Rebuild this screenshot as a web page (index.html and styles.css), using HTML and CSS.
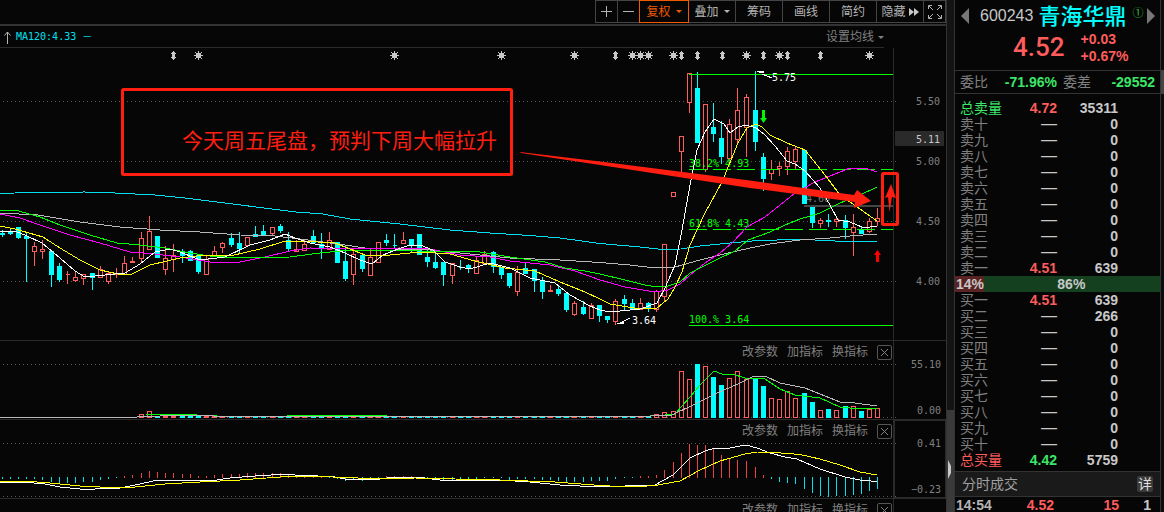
FILE: index.html
```html
<!DOCTYPE html>
<html lang="zh-CN">
<head>
<meta charset="utf-8">
<title>青海华鼎 600243</title>
<link rel="stylesheet" href="styles.css">
</head>
<body>
<div class="app">
  <main class="charts">
    <div class="toolbar">
      <button class="tool icon" aria-label="放大"><svg width="11" height="11"><path d="M0 5.5h11M5.5 0v11"/></svg></button>
      <button class="tool icon" aria-label="缩小"><svg width="11" height="11"><path d="M0 5.5h11"/></svg></button>
      <button class="tool wide active">复权<span class="caret"></span></button>
      <button class="tool wide">叠加<span class="caret"></span></button>
      <button class="tool wide">筹码</button>
      <button class="tool wide">画线</button>
      <button class="tool wide">简约</button>
      <button class="tool wide tight">隐藏<svg width="10" height="8"><path class="solid" d="M0 0l5 4l-5 4zM5 0l5 4l-5 4z"/></svg></button>
      <button class="tool icon" aria-label="全屏"><svg width="14" height="14"><path d="M.5 4V.5H4M10 .5h3.500V4M13.500 10v3.500H10M4 13.500H.5V10M1 1l4 4M13 1l-4 4M13 13l-4-4M1 13l4-4"/></svg></button>
    </div>

    <section class="pane price">
      <header class="ma-bar">
        <svg width="7" height="13"><path d="M3.500 13V1M.5 4.500l3-3.500l3 3.500"/></svg>
        <span class="ma-value">MA120:4.33 －</span>
        <button class="ma-set">设置均线<span class="caret"></span></button>
      </header>
      <svg class="plot" viewBox="0 48 946 292" preserveAspectRatio="xMaxYMin slice">
        <defs>
          <path id="diamond" d="M-.5-4.500h1v1h1v1h1v1h-1v3h1v1h-1v1h-1v1h-1v-1h-1v-1h-1v-1h1v-3h-1v-1h1v-1h1z"/>
          <path id="star" d="M-2.500-2.500h5v5h-5zM-.5-4.500h1v9h-1zM-4.500-.5h9v1h-9zM-3.500-3.500h1v1h-1zM2.500-3.500h1v1h-1zM-3.500 2.500h1v1h-1zM2.500 2.500h1v1h-1z"/>
        </defs>
        <path class="grid" d="M3 101.500H896M3 161.500H896M3 221.500H896M3 281.500H896"/>
        <path class="axis" d="M893.500 48V340"/>
        <g id="marks"></g>
        <path class="cost" d="M804 206H893"/>
        <text class="num dim" x="806" y="202">4.66</text>
        <g id="candles"></g>
        <path class="line green" d="M689 74.500H893M689 325.500H893"/>
        <path class="line green dash" d="M689 169.500H893M689 229.500H893"/>
        <g class="num green-text">
          <text x="689" y="167">38.2% 4.93</text>
          <text x="689" y="227">61.8% 4.43</text>
          <text x="689" y="323">100.% 3.64</text>
        </g>
        <g id="averages"></g>
        <path class="line white" d="M757 71.500h7M759 72.500h5M762 74l10 4M617 323.500h7M620 322.500h4M622 322l8-4"/>
        <text class="num bright" x="772" y="81">5.75</text>
        <text class="num bright" x="632" y="324">3.64</text>
        <path fill="#00f800" d="M762 110h3v8h2l-3.500 5l-3.500-5h2z"/>
        <path fill="#ff0000" d="M876 262h3v-7h2l-3.500-5l-3.500 5h2z"/>
        <g class="num axis-text">
          <text x="940" y="105">5.50</text>
          <rect x="895" y="131" width="49" height="15" rx="1"/>
          <text class="current" x="940" y="143">5.11</text>
          <text x="940" y="165">5.00</text>
          <text x="940" y="225">4.50</text>
          <text x="940" y="285">4.00</text>
        </g>
        <rect class="note-box" x="122.500" y="89.500" width="389" height="85" rx="1"/>
        <text class="note" x="182" y="148">今天周五尾盘，预判下周大幅拉升</text>
        <path class="note-fill" d="M520 152L600 161.500L750 180.500L854 195L857 190L871 201L854 208L855 202L750 188L600 165L521 153z"/>
        <rect class="note-box" x="882.500" y="173.500" width="15" height="51" rx="1"/>
        <path class="note-fill" d="M891 184l5 14l-4-1l-2.500 15l-1.500-15l-3 1z"/>
      </svg>
    </section>

    <section class="pane">
      <div class="pane-tools">
        <button>改参数</button><button>加指标</button><button>换指标</button>
        <button class="close" aria-label="关闭"><svg width="9" height="9"><path d="M1 1l7 7M8 1l-7 7"/></svg></button>
      </div>
      <svg class="plot" viewBox="0 341 946 78" preserveAspectRatio="xMaxYMin slice">
        <path class="grid" d="M3 364.500H896M3 417.500H896"/>
        <path class="axis" d="M893.500 341V419"/>
        <g id="volume"></g>
        <g class="num axis-text"><text x="941" y="368">55.10</text><text x="941" y="414">0.00</text></g>
      </svg>
    </section>

    <section class="pane">
      <div class="pane-tools">
        <button>改参数</button><button>加指标</button><button>换指标</button>
        <button class="close" aria-label="关闭"><svg width="9" height="9"><path d="M1 1l7 7M8 1l-7 7"/></svg></button>
      </div>
      <svg class="plot" viewBox="0 420 946 78" preserveAspectRatio="xMaxYMin slice">
        <path class="grid" d="M3 443.500H896M3 496.500H896"/>
        <path class="axis" d="M893.500 420V498"/>
        <rect class="selected" x="894.500" y="420.500" width="51" height="77"/>
        <g id="macd"></g>
        <g class="num axis-text"><text x="941" y="447">0.41</text><text x="941" y="493">−0.23</text></g>
      </svg>
    </section>

    <section class="pane last">
      <div class="pane-tools">
        <button>改参数</button><button>加指标</button><button>换指标</button>
        <button class="close" aria-label="关闭"><svg width="9" height="9"><path d="M1 1l7 7M8 1l-7 7"/></svg></button>
      </div>
      <div class="axis-blank"></div>
    </section>
  </main>

  <div class="splitter"><div class="thumb"><svg width="5" height="19"><path class="solid" d="M1 0l3 6v7l-3 6z"/></svg></div></div>

  <aside class="quote">
    <header class="stock">
      <div class="stock-name">
        <button class="nav" aria-label="上一只"><svg width="8" height="16"><path d="M8 0v16L0 8z"/></svg></button>
        <span class="code">600243</span>
        <h1>青海华鼎</h1>
        <span class="badge">①</span>
        <button class="nav" aria-label="下一只"><svg width="8" height="16"><path d="M0 0v16L8 8z"/></svg></button>
      </div>
      <div class="stock-price">
        <strong>4.52</strong>
        <div class="change"><span>+0.03</span><span>+0.67%</span></div>
      </div>
    </header>
    <div class="ratio">
      <span>委比</span><b class="rate">-71.96%</b><span>委差</span><b>-29552</b>
    </div>
    <table class="book sell">
      <tbody>
        <tr class="total down"><th>总卖量</th><td class="up">4.72</td><td>35311</td></tr>
        <tr><th>卖十</th><td class="none">—</td><td>0</td></tr>
        <tr><th>卖九</th><td class="none">—</td><td>0</td></tr>
        <tr><th>卖八</th><td class="none">—</td><td>0</td></tr>
        <tr><th>卖七</th><td class="none">—</td><td>0</td></tr>
        <tr><th>卖六</th><td class="none">—</td><td>0</td></tr>
        <tr><th>卖五</th><td class="none">—</td><td>0</td></tr>
        <tr><th>卖四</th><td class="none">—</td><td>0</td></tr>
        <tr><th>卖三</th><td class="none">—</td><td>0</td></tr>
        <tr><th>卖二</th><td class="none">—</td><td>0</td></tr>
        <tr><th>卖一</th><td class="up">4.51</td><td>639</td></tr>
      </tbody>
    </table>
    <div class="balance"><span class="buy-share" style="width:14%">14%</span><span class="sell-share">86%</span></div>
    <table class="book buy">
      <tbody>
        <tr><th>买一</th><td class="up">4.51</td><td>639</td></tr>
        <tr><th>买二</th><td class="none">—</td><td>266</td></tr>
        <tr><th>买三</th><td class="none">—</td><td>0</td></tr>
        <tr><th>买四</th><td class="none">—</td><td>0</td></tr>
        <tr><th>买五</th><td class="none">—</td><td>0</td></tr>
        <tr><th>买六</th><td class="none">—</td><td>0</td></tr>
        <tr><th>买七</th><td class="none">—</td><td>0</td></tr>
        <tr><th>买八</th><td class="none">—</td><td>0</td></tr>
        <tr><th>买九</th><td class="none">—</td><td>0</td></tr>
        <tr><th>买十</th><td class="none">—</td><td>0</td></tr>
        <tr class="total rise"><th>总买量</th><td class="fall">4.42</td><td>5759</td></tr>
      </tbody>
    </table>
    <div class="ticks-head"><h2>分时成交</h2><button>详</button></div>
    <div class="tick"><span>14:54</span><span class="up">4.52</span><span class="up">15</span><span>1</span></div>
  </aside>
  <div class="scroll"><div class="scroll-thumb"></div></div>
</div>
<script src="charts.js"></script>
</body>
</html>
```
FILE: styles.css
```css
* { box-sizing: border-box; }
body {
  margin: 0;
  background: #060606;
  color: #c8c8c8;
  font: 12px/16px "Liberation Sans", "Noto Sans CJK SC", sans-serif;
}
button {
  margin: 0; padding: 0; border: 0; background: none;
  color: inherit; font: inherit; white-space: nowrap;
}
.app { display: flex; height: 100vh; overflow: hidden; }
.charts { flex: 1; min-width: 0; display: flex; flex-direction: column; }

.toolbar {
  display: flex; justify-content: flex-end; flex: none;
  height: 26px; padding-bottom: 2px; border-bottom: 2px solid #333;
}
.tool {
  display: flex; align-items: center; justify-content: center; gap: 5px;
  height: 23px; margin-left: -1px; border: 1px solid #444; color: #b4b4b4;
}
.tool.icon { width: 23px; }
.tool.wide { width: 48px; }
.tool.tight { gap: 3px; }
.tool.active { position: relative; width: 50px; border-color: #f05a00; color: #f05a00; }
.tool svg, .ma-bar svg, .close svg { fill: none; stroke: #b4b4b4; }
.tool svg .solid, .splitter .solid { fill: #c8c8c8; stroke: none; }
.caret { border: 3px solid transparent; border-top-color: currentColor; border-bottom: 0; }

.pane { position: relative; flex: none; border-bottom: 1px solid #2a2a2a; }
.pane.last { flex: 1; display: flex; justify-content: flex-end; border: 0; overflow: hidden; }
.axis-blank { width: 53px; border-left: 1px solid #2a2a2a; }
.plot { display: block; width: 100%; }
.ma-bar {
  display: flex; align-items: center; gap: 5px;
  height: 22px; margin-right: 62px; padding: 1px 0 0 4px; border-bottom: 1px solid #2a2a2a;
}
.ma-value { color: #00e0f0; font: 10px/16px "DejaVu Sans Mono", "Noto Sans CJK SC", monospace; }
.ma-set { display: flex; align-items: center; gap: 4px; margin-left: auto; color: #808080; }
.pane-tools {
  position: absolute; top: 3px; right: 54px;
  display: flex; align-items: center; gap: 9px; color: #808080;
}
.close {
  display: flex; align-items: center; justify-content: center;
  width: 15px; height: 15px; border: 1px solid #555; border-radius: 2px;
}
.close svg { stroke: #808080; }

.grid { fill: none; stroke: #555; stroke-dasharray: 1 3; shape-rendering: crispEdges; }
.axis { stroke: #2a2a2a; shape-rendering: crispEdges; }
.selected { fill: none; stroke: #2a2a2a; }
.cost { stroke: #444; stroke-width: 2; }
.mark { fill: #c8c8c8; shape-rendering: crispEdges; }
.line { fill: none; stroke-width: 1; shape-rendering: crispEdges; }
.dash { stroke-dasharray: 18 6; }
.white { stroke: #fff; }
.yellow { stroke: #ff0; }
.green { stroke: #0f0; }
.magenta { stroke: #f0f; }
.gray { stroke: #b8b8b8; }
.cyan { stroke: #00e0f0; }
.bar-up { fill: #060606; stroke: #ff5c5c; shape-rendering: crispEdges; }
.bar-down { fill: #0ff; stroke: #0ff; shape-rendering: crispEdges; }
.macd-up { stroke: #f04040; }
.macd-down { stroke: #00e0f0; }
.num { font: 10px "DejaVu Sans Mono", monospace; }
.green-text { fill: #0f0; }
.bright { fill: #fff; }
.dim { fill: #777; }
.axis-text { fill: #808080; text-anchor: end; }
.axis-text rect { fill: #2a2a2a; }
.axis-text .current { fill: #c8c8c8; }
.note-box { fill: none; stroke: #ff1e10; stroke-width: 3; }
.note-fill { fill: #ff1e10; }
.note { fill: #ff1e10; font: 21px "Noto Sans CJK SC", sans-serif; }

.splitter {
  display: flex; flex-direction: column; justify-content: flex-end; flex: none;
  width: 9px; background: #141414; border-left: 1px solid #333; border-right: 1px solid #333;
}
.thumb { height: 20%; padding-top: 50px; background: #3a3a3a; }
.thumb svg { display: block; }

.quote { flex: none; width: 205px; display: flex; flex-direction: column; font-size: 14px; }
.quote > * { flex: none; }
.stock { height: 70px; padding: 4px 5px 0 6px; }
.stock-name { display: flex; align-items: center; height: 24px; }
.nav { width: 8px; height: 16px; flex: none; }
.nav svg { display: block; fill: #777; }
.code { margin-left: 11px; font-size: 16px; }
h1 { margin: 0 0 4px 5px; color: #0ff; font: 500 22px/24px "Noto Sans CJK SC", sans-serif; }
.badge { margin: 0 auto 8px 6px; color: #30c040; font: 11px/12px "Noto Sans CJK SC", sans-serif; }
.stock-price { display: flex; align-items: center; gap: 16px; padding-left: 52px; color: #ff5c5c; }
.stock-price strong { font: 500 26px/32px Roboto, sans-serif; }
.change { display: flex; flex-direction: column; padding-top: 3px; font-weight: bold; line-height: 17px; }
.ratio {
  display: flex; align-items: center; gap: 6px; height: 24px; padding: 0 5px;
  border: 1px solid #333; border-width: 1px 0; color: #808080;
}
.ratio b { flex: 1; text-align: right; color: #3ce668; }
.ratio .rate { flex: none; width: 63px; }
.book { width: 100%; border-collapse: collapse; table-layout: fixed; }
.book.sell { margin-top: 6px; }
.book tr { height: 16px; }
.book th { width: 50px; padding: 0 0 0 5px; color: #808080; font-weight: normal; text-align: left; }
.book td { padding: 0; font-weight: bold; text-align: right; line-height: 16px; }
.book th, .ratio, .ticks-head { line-height: 16px; white-space: nowrap; }
.book td:nth-child(2) { width: 52px; }
.book td:last-child { padding-right: 42px; }
.book td.none { font-size: 16px; font-weight: normal; }
.book .up, .up, .rise th { color: #ff5c5c; }
.book .fall, .down th { color: #3ce668; }
.balance { display: flex; height: 16px; font-weight: bold; background: #154020; }
.buy-share { background: #5a2222; padding-left: 1px; white-space: nowrap; }
.sell-share { flex: 1; padding-right: 1px; text-align: center; }
.ticks-head {
  display: flex; align-items: center; justify-content: space-between;
  height: 26px; margin-top: 3px; padding: 0 7px; background: #1a1a1a;
  border: 1px solid #333; border-width: 1px 0; color: #a0a0a0;
}
h2 { margin: 0; font-size: 14px; font-weight: normal; }
.ticks-head button { width: 16px; height: 16px; border-radius: 2px; background: #3a3a3a; color: #ddd; }
.tick {
  display: grid; grid-template-columns: 38px 60px 1fr 32px; padding: 0 9px 0 1px;
  font-weight: bold; text-align: right;
}
.tick span:first-child { color: #b4b4b4; text-align: left; }
.scroll { flex: none; width: 4px; border-left: 1px solid #333; background: #0c0c0c; }
.scroll-thumb { height: 24px; margin-top: 70px; background: #444; }
```
FILE: charts.js
```js
// Candles: centre x, direction (1 up, 0 down), body top, body bottom, high, low
const candles = [
  [2,0,233,234,230,236],[10,0,232,233,228,234],[18,0,227,237,227,238],[26,0,236,238,232,281],
  [34,1,246,251,242,265],[42,1,249,251,240,258],[51,0,251,274,251,286],[59,0,266,279,263,281],
  [67,1,274,274,271,283],[75,1,277,280,271,281],[83,1,274,278,274,284],[92,0,273,277,273,289],
  [100,1,269,277,266,277],[108,1,273,281,272,283],[116,1,273,274,268,277],[124,1,263,274,256,274],
  [132,1,261,262,257,262],[141,1,238,258,232,262],[149,1,231,249,216,249],[157,0,236,257,236,257],
  [165,1,258,269,246,274],[173,1,255,259,244,271],[182,0,251,255,249,262],[190,0,251,260,250,260],
  [198,0,255,271,254,273],[206,1,259,274,255,274],[214,1,251,256,246,256],[222,1,243,247,242,252],
  [231,0,238,244,233,246],[239,0,243,248,232,252],[247,1,237,245,237,245],[255,0,234,236,226,236],
  [263,0,231,235,225,235],[272,1,227,233,227,235],[280,0,226,230,224,232],[288,0,240,248,232,251],
  [296,1,249,251,240,251],[304,1,244,250,240,250],[313,0,236,242,230,243],[321,0,244,248,233,258],
  [329,1,240,249,232,249],[337,0,242,262,242,262],[345,0,261,278,245,280],[353,1,254,274,249,284],
  [362,0,255,268,255,271],[370,1,257,275,249,275],[378,1,242,262,242,262],[386,0,240,242,234,245],
  [394,0,245,245,234,248],[403,1,240,243,232,243],[411,0,239,244,239,251],[419,0,234,254,234,254],
  [427,0,257,261,250,266],[435,0,262,267,251,268],[443,0,262,274,262,285],[452,1,263,275,263,283],
  [460,0,267,267,260,269],[468,0,265,267,264,272],[476,1,260,273,257,273],[484,1,254,263,251,263],
  [493,0,252,266,251,272],[501,0,267,274,267,278],[509,0,273,285,273,287],[517,1,272,291,266,295],
  [525,0,268,273,262,273],[534,0,269,280,269,291],[542,0,280,291,277,298],[550,1,290,291,285,291],
  [558,0,289,293,286,295],[566,0,293,309,293,311],[574,1,303,314,301,315],[583,0,307,313,301,314],
  [591,1,305,318,303,318],[599,0,305,315,305,321],[607,0,316,319,316,322],[615,1,301,321,299,324],
  [624,0,299,303,295,310],[632,0,303,308,299,308],[640,1,303,309,298,309],[648,0,303,308,302,311],
  [656,1,291,309,290,311],[664,1,244,296,244,301],[673,1,192,196,192,196],[681,1,136,151,136,174],
  [689,1,73,102,73,112],[697,0,88,142,72,142],[705,1,104,169,104,171],[713,0,127,133,103,141],
  [721,0,138,156,121,163],[729,1,124,158,119,160],[737,1,110,139,88,143],[746,1,97,127,94,156],
  [755,0,110,141,71,150],[763,0,157,178,153,190],[771,1,169,173,160,179],[779,1,166,168,162,175],
  [787,1,151,166,147,174],[795,1,149,161,147,168],[804,0,150,203,150,203],[812,0,207,222,207,227],
  [820,1,220,223,218,227],[828,0,220,221,214,226],[836,1,219,221,218,226],[845,0,220,227,215,238],
  [853,1,227,232,214,255],[861,0,229,233,226,233],[869,1,221,231,218,232],[877,1,218,221,208,225]
];

const averages = {
  cyan: "0,194 22,192.5 85,192 115,193 155,195 185,198 300,212.5 320,213.5 350,219 400,224 450,230 490,233 530,235.500 560,238 600,243.5 640,247 662,249.5 681,249 700,246 730,243 752,241 790,239.5 805,239.5 835,241 877,241",
  gray: "0,213 38,215 80,222 120,227 160,230 200,232 240,235 275,236 300,239 345,245 365,248 430,250 470,254 510,258 560,260 600,262.5 630,265 655,268 675,267 700,260 720,255 750,248 770,244 800,240 830,238 850,236 877,234",
  magenta: "0,214 20,218 40,225 70,235 100,243 130,252 155,254 180,257 210,262 240,262 265,257 290,251 310,248 350,249 400,248 430,249 460,255 490,257 510,261 550,265 575,271 600,280 625,287 655,292 668,290 680,284 690,275 705,263 720,253 732,243 747,227 765,217 780,205 795,193 815,182 835,174 850,168 865,168 877,172",
  green: "0,210 15,210 40,217 60,225 90,235 117,243 140,245 165,248 190,253 210,256 240,258 290,257 320,253 340,251 370,250 420,251 480,252 510,257 545,262 565,268 585,271 600,274 625,280 645,285 657,287 668,286 680,282 690,273 720,258 735,251 748,240 770,232 785,225 800,219 820,213 840,203 860,195 877,187",
  yellow: "0,226 15,229 43,237 60,248 80,260 100,270 118,274 132,274 150,265 180,258 205,255 230,256 260,249 285,241 300,241 335,243 365,255 390,255 420,252 450,254 475,261 505,268 535,271 560,282 585,292 600,299 610,304 640,309 657,308 668,299 675,287 682,272 690,245 705,213 722,182 738,143 747,128 756,124 762,127 770,135 787,143 805,150 825,175 840,195 877,221",
  white: "0,231 15,231 27,236 42,243 60,258 75,271 85,277 95,276 125,273 140,264 155,252 170,249 180,252 200,260 225,257 250,245 270,240 285,234 295,238 310,243 330,247 345,253 360,260 372,264 383,255 398,249 410,245 420,245 433,250 445,262 460,267 470,269 490,263 510,268 530,278 555,283 570,295 590,306 600,310 610,312 640,309 657,303 665,288 675,265 682,230 690,185 697,150 705,132 714,119 724,124 730,133 738,127 746,125 756,128 764,134 775,146 787,161 795,164 805,171 820,188 830,205 838,220 850,222 862,227 870,227 877,226"
};

// Top edge of each volume bar from x = 656 on
const volumeTops = [414,412,411,371,379,364,366,377,385,378,371,379,378,386,398,399,391,398,393,402,410,409,410,406,406,411,409,408];
const volumeLines = {
  green: "146,415 187,414.500 227,416.500 350,415.500 383,415.500 390,416.500 640,416.500 660,415.500 675,414 690,397 700,385 714,371 722,374 732,374 745,378 765,379 780,389 795,395 820,398 840,407 860,409 877,408",
  gray: "0,417 137,417 160,416 200,415.500 227,416.500 640,416.500 672,415 695,404 715,394 740,383 754,376 765,376 780,383 805,388 825,396 840,402 855,403 877,406"
};

// End of each MACD bar, one per candle; the zero line is at 477
const macdEnds = [479,479,479,479,479,480,482,483,483,483,482,482,480,479,478,476,475,473,471,472,473,473,474,474,476,476,475,474,474,474,473,473,473,473,473,475,476,476,476,477,478,479,481,480,481,480,478,476,476,476,476,478,478,478,480,480,480,480,479,478,478,478,480,479,479,479,480,480,481,482,482,482,481,481,481,479,478,478,476,476,475,470,462,453,444,445,445,448,455,458,460,461,467,475,479,482,483,484,489,493,496,497,496,496,495,494,491,489];
const macdLines = {
  white: "0,482 23,482 45,484 60,487 80,489 95,489 97,488 120,488 140,484 153,481 190,480.500 210,481 230,478 255,476 280,474.500 310,475.500 335,477 345,479 380,479 395,477 425,478 440,480 500,480 530,482 560,485 600,487 625,486 655,485 673,475 690,458 705,451 715,448 725,449 735,447 746,445 757,448 770,453 785,457 797,459 820,469 845,477 860,480 877,481.500",
  yellow: "0,481 23,481 50,483 80,486 100,487 135,487 165,484 200,482 240,480 280,477 320,476.500 345,477.500 370,478.500 415,478 455,479 500,480 555,482 600,485.500 630,487 655,485.500 680,481 700,470 720,461 745,454 757,452 775,452.500 800,454.500 820,459 840,465 860,472 877,475"
};

const draw = (id, parts) => { document.getElementById(id).innerHTML = parts.join(""); };
const lines = set => Object.entries(set).map(([name, points]) => `<polyline class="line ${name}" points="${points}"/>`);
const style = up => (up ? "bar-up" : "bar-down");
const box = (x, top, bottom) => `M${x - 1.5} ${top + 0.5}h4V${Math.max(bottom - 0.5, top + 0.5)}h-4z`;

// Wicks stop at the body so that rising candles stay hollow
draw("candles", candles.map(([x, up, top, bottom, high, low]) =>
  `<path class="${style(up)}" d="M${x + 0.5} ${high}V${top}M${x + 0.5} ${bottom + 1}V${low + 1}${box(x, top, bottom + 1)}"/>`));
draw("averages", lines(averages));

const firstTall = candles.length - volumeTops.length;
draw("volume", candles.map(([x, up], i) => {
  let top = i < 17 ? 417 : 416;
  if (x === 141) top = 414;
  if (x === 149) top = 411;
  if (i >= firstTall) top = volumeTops[i - firstTall];
  return `<path class="${style(up)}" d="${box(x, top, 418)}"/>`;
}).concat(lines(volumeLines)));

draw("macd", candles.map(([x], i) => {
  const end = macdEnds[i];
  return `<path class="line ${end < 477.500 ? "macd-up" : "macd-down"}" d="M${x + 0.5} ${end < 477.500 ? 478 : 477}V${end}"/>`;
}).concat(lines(macdLines)));

const mark = (id, xs) => xs.map(x => `<use class="mark" href="#${id}" x="${x + 0.5}" y="55.5"/>`);
draw("marks", [
  ...mark("diamond", [173, 615, 681, 697, 722, 763, 787, 820]),
  ...mark("star", [198, 394, 501, 574, 632, 640, 648, 673, 746, 779, 869])
]);
```
